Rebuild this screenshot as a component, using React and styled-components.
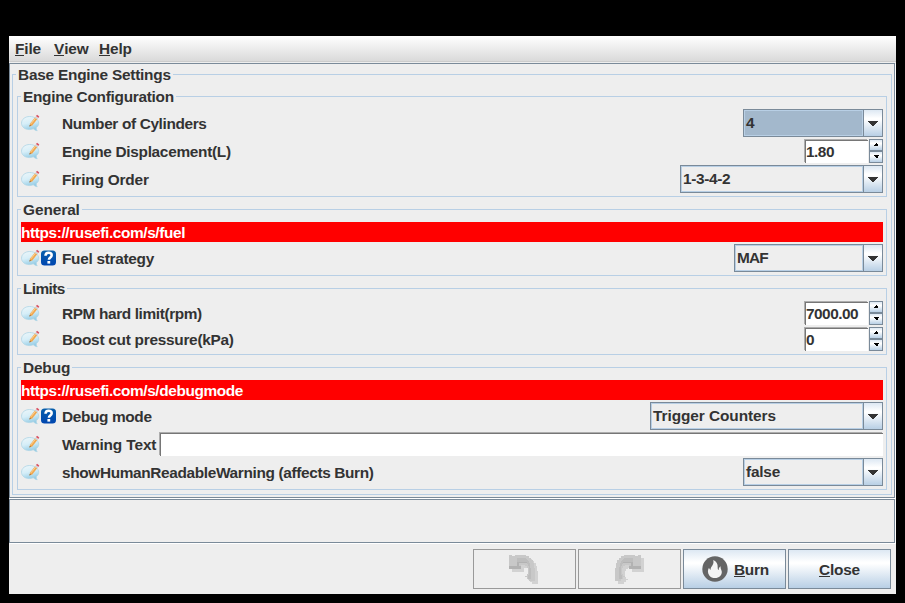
import React from "react";
import styled, { createGlobalStyle, css } from "styled-components";

const line = "#7a8a99";
const pale = "#b8cfe5";
const metal = "linear-gradient(#dde8f3 0%, #ffffff 32%, #ffffff 36%, #b8cfe5 100%)";

const GlobalStyle = createGlobalStyle`
  * { box-sizing: border-box; }
  body { margin: 0; background: #000; }
  button, input { font: inherit; color: inherit; }
`;

const Desktop = styled.div`
  height: 603px;
  padding: 36px 9px 9px;
  background: #000;
  color: #333;
  font: bold 15.4px/18px "Liberation Sans", Arial, sans-serif;
  white-space: nowrap;
`;

const Window = styled.main`
  height: 558px;
  display: flex;
  flex-direction: column;
  background: #eee;
`;

const MenuBar = styled.nav`
  height: 27px;
  display: flex;
  gap: 12px;
  padding: 4px 6px;
  background: linear-gradient(#fff, #dadada 25px, #ccc 25px, #ccc 26px, #eee 26px);
`;

const MenuItem = styled.span`
  width: ${(p) => p.$width}px;
  letter-spacing: -0.15px;
`;

const Mnemonic = styled.span`
  box-shadow: 0 -1px 0 #333 inset;
  display: inline-block;
  height: 16px;
  line-height: 18px;
`;

const ScrollPane = styled.section`
  height: ${(p) => p.$height}px;
  border: 1px solid ${line};
  margin: 0 1px 1px 0;
  padding: ${(p) => p.$pad || "0"};
  box-shadow: 1px 1px 0 #fff;
`;

const TitledPanel = styled.section`
  position: relative;
  border: 1px solid ${pale};
  display: flex;
  flex-direction: column;
  gap: ${(p) => (p.$outer ? 12 : 2)}px;
  padding: ${(p) => (p.$outer ? "21px 4px 4px" : "12px 3px 3px")};
`;

const PanelTitle = styled.h2`
  position: absolute;
  left: 3px;
  top: -9px;
  margin: 0;
  padding: 0 2px;
  background: #eee;
  font: inherit;
  letter-spacing: ${(p) => p.$track || 0}px;
`;

const LinkBar = styled.a`
  height: 20px;
  padding-top: 2px;
  background: #f00;
  color: #fff;
  letter-spacing: -0.38px;
`;

const SettingRow = styled.div`
  height: ${(p) => p.$height}px;
  display: flex;
  align-items: center;
`;

const IconSlot = styled.div`
  width: 41px;
  height: 20px;
  display: flex;
  align-items: center;
  gap: 1px;
  flex: none;
`;

const Label = styled.label`
  flex: ${(p) => (p.$fit ? "0 0 97px" : 1)};
  padding-top: 2px;
  letter-spacing: ${(p) => p.$track || 0}px;
`;

const ComboBox = styled.div`
  width: ${(p) => p.$width}px;
  height: 28px;
  display: flex;
  border: 1px solid ${line};
`;

const ComboValue = styled.div`
  flex: 1;
  border: 1px solid ${pale};
  padding: 3px 0 0 1px;
  background: ${(p) => (p.$focused ? "#a3b8cc" : "#eee")};
  letter-spacing: ${(p) => p.$track || 0}px;
`;

const ComboButton = styled.div`
  width: 19px;
  border-left: 1px solid ${line};
  background: ${metal};
  display: flex;
  justify-content: center;
  padding-top: 11px;
`;

const sunken = css`
  background: #fff;
  border: solid #767676;
  border-width: 1px 0 0 1px;
  box-shadow: -1px -1px 0 #adadad;
`;

const SpinnerBox = styled.div`
  width: 79px;
  height: 24px;
  display: flex;
`;

const SpinnerField = styled.div`
  ${sunken}
  width: 63px;
  margin: 1px 1px 0 1px;
  padding: 2px 0 0;
  letter-spacing: -0.5px;
`;

const SpinnerButtons = styled.div`
  width: 14px;
  display: grid;
  grid-template-rows: 12px 12px;
`;

const SpinnerButton = styled.div`
  border: 1px solid ${line};
  background: ${metal};
  display: grid;
  place-items: center;
`;

const TextField = styled.div`
  ${sunken}
  flex: 1;
  height: 23px;
  margin: 1px 0 0 1px;
`;

const ButtonBar = styled.footer`
  display: flex;
  justify-content: flex-end;
  gap: 2px;
  padding: 5px 5px 0 0;
`;

const ActionButton = styled.button`
  width: 103px;
  height: 40px;
  padding: 0;
  display: flex;
  align-items: center;
  justify-content: center;
  gap: 6px;
  border: 1px solid ${(p) => (p.disabled ? "#999" : line)};
  border-radius: 0;
  background: ${(p) => (p.disabled ? "#eee" : metal)};
`;

const ButtonText = styled.span`
  padding-top: 2px;
  letter-spacing: -0.2px;
`;

const BurnGlyph = styled.svg`
  display: block;
  margin: 0 0 1px 2px;
`;

const NoteIcon = () => (
  <svg width="19" height="18" viewBox="0 0 19 18">
    <defs>
      <linearGradient id="bubble" x1="0.1" y1="0" x2="0.4" y2="1">
        <stop offset="0" stopColor="#edf6f9" />
        <stop offset="0.5" stopColor="#d6eef8" />
        <stop offset="1" stopColor="#93cbe4" />
      </linearGradient>
    </defs>
    <path d="M8.700 2.500C4 2.500.5 5.400.5 9.100s3.400 6.500 7.700 6.500c1.500 0 3-.3 4.100-.8 1 1 2.200 1.600 3.900 2-.8-1-1-2.200-.8-3.300 1.500-1 2.300-2.500 2.300-4.200 0-3.700-3.900-6.800-9-6.800z" fill="url(#bubble)" stroke="#aed6e6" strokeWidth=".8" />
    <path d="m8.400 12.600.7-3 5-6.300 2.300 1.700-5.100 6.500z" fill="#f0a850" />
    <path d="m9.900 9.900 5-6.300" stroke="#ffdca2" strokeWidth=".8" />
    <path d="m8.400 12.600.4-1.700 1.200.9z" fill="#6a584a" />
    <path d="m14.100 3 2.500 2" stroke="#c8d0d6" strokeWidth="1.300" />
    <path d="m14.900 2 1.200-1.300 2.200 1.800-1 1.400z" fill="#d85565" />
  </svg>
);

const HelpIcon = () => (
  <svg width="15" height="16" viewBox="0 0 15 16">
    <defs>
      <linearGradient id="help" x1="0" y1="0" x2="0" y2="1">
        <stop offset="0" stopColor="#075fab" />
        <stop offset="1" stopColor="#0046b0" />
      </linearGradient>
    </defs>
    <rect y=".5" width="15" height="15" rx="3.500" fill="url(#help)" />
    <path d="M4.500 5.800c0-1.900 1.200-3 3.100-3s3.100 1 3.100 2.500c0 2.200-2.800 2.200-2.800 4.500" fill="none" stroke="#fff" strokeWidth="2.500" />
    <path d="M6.400 11h2.800v2.600H6.400z" fill="#fff" />
  </svg>
);

const DownArrow = () => (
  <svg width="10" height="5" viewBox="0 0 10 5" shapeRendering="crispEdges">
    <path d="M0 0h10v1H9v1H8v1H7v1H6v1H4V4H3V3H2V2H1V1H0z" fill="#333" />
  </svg>
);

const SpinArrow = ({ down }) => (
  <svg width="5" height="4" viewBox="0 0 5 4" shapeRendering="crispEdges">
    <path d={down ? "M0 0h5v1H4v2H2V2H1V1H0z" : "M2 0h1v1h1v2H0V2h1V1h1z"} fill="#000" />
  </svg>
);

const arrowShape =
  "M0 1H3V2H6V1H17V2H20V4H22V6H24V9H25V14H26V27H20V25H18V23H16V22H18V20H19V14H18V12H16V11H12V15H0z";

const ArrowIcon = ({ redo }) => {
  const mirror = redo ? "matrix(-1 0 0 1 27 0)" : undefined;
  return (
    <svg width="31" height="30" viewBox="0 0 31 30" shapeRendering="crispEdges">
      <g transform="translate(3 3)">
        <path d={arrowShape} transform={mirror} fill="#d2d2d2" />
      </g>
      <g transform={mirror}>
        <path d={arrowShape} fill="#c8c8c8" />
        <path d="M8 4h8l3 2 2 4 1 7v8h-3v-4h1v-8l-2-4H8z" fill="#bdbdbd" />
        <path d="M0 12h12v3H0zM8 8h10v1H10v3H8z" fill="#b2b2b2" />
      </g>
    </svg>
  );
};

const BurnIcon = () => (
  <BurnGlyph width="26" height="26" viewBox="0 0 26 26">
    <circle cx="13" cy="13" r="12.700" fill="#656565" />
    <path d="M11.300 4c.7 3.200-.5 4.800-1.600 6.600-.8 1.200-1.200 2.200-1.100 3.300-.9-.5-1.400-1.200-1.600-2.100C5.600 14 5.500 17 7.300 19.400c1.400 1.800 3.400 2.700 5.800 2.700 4 0 6.900-2.800 6.700-6.300-.1-2-1.500-3-1.200-5.600-1.300.8-1.900 2-1.900 3.900-.9-.5-1.100-1.500-1-2.700.2-3.200-1.200-5.900-4.400-7.400z" fill="#f5f5f5" />
  </BurnGlyph>
);

const Combo = ({ width, value, focused, track }) => (
  <ComboBox $width={width}>
    <ComboValue $focused={focused} $track={track}>{value}</ComboValue>
    <ComboButton><DownArrow /></ComboButton>
  </ComboBox>
);

const Spinner = ({ value }) => (
  <SpinnerBox>
    <SpinnerField>{value}</SpinnerField>
    <SpinnerButtons>
      <SpinnerButton><SpinArrow /></SpinnerButton>
      <SpinnerButton><SpinArrow down /></SpinnerButton>
    </SpinnerButtons>
  </SpinnerBox>
);

const Setting = ({ label, help, height = 28, fit, track, children }) => (
  <SettingRow $height={height}>
    <IconSlot>
      <NoteIcon />
      {help && <HelpIcon />}
    </IconSlot>
    <Label $fit={fit} $track={track}>{label}</Label>
    {children}
  </SettingRow>
);

export default function App() {
  return (
    <Desktop>
      <GlobalStyle />
      <Window>
        <MenuBar>
          <MenuItem $width={27}><Mnemonic>F</Mnemonic>ile</MenuItem>
          <MenuItem $width={33}><Mnemonic>V</Mnemonic>iew</MenuItem>
          <MenuItem $width={34}><Mnemonic>H</Mnemonic>elp</MenuItem>
        </MenuBar>
        <ScrollPane $height={435} $pad="10px 2px 2px">
          <TitledPanel $outer>
            <PanelTitle $track={-0.23}>Base Engine Settings</PanelTitle>
            <TitledPanel>
              <PanelTitle $track={-0.28}>Engine Configuration</PanelTitle>
              <Setting label="Number of Cylinders" track={-0.36}><Combo width={140} value="4" focused /></Setting>
              <Setting label="Engine Displacement(L)" track={-0.3} height={24}><Spinner value="1.80" /></Setting>
              <Setting label="Firing Order" track={-0.18}><Combo width={203} value="1-3-4-2" track={-0.33} /></Setting>
            </TitledPanel>
            <TitledPanel>
              <PanelTitle $track={-0.07}>General</PanelTitle>
              <LinkBar>https://rusefi.com/s/fuel</LinkBar>
              <Setting label="Fuel strategy" track={-0.3} help><Combo width={149} value="MAF" track={-0.8} /></Setting>
            </TitledPanel>
            <TitledPanel>
              <PanelTitle $track={-0.6}>Limits</PanelTitle>
              <Setting label="RPM hard limit(rpm)" track={-0.38} height={24}><Spinner value="7000.00" /></Setting>
              <Setting label="Boost cut pressure(kPa)" track={-0.27} height={24}><Spinner value="0" /></Setting>
            </TitledPanel>
            <TitledPanel>
              <PanelTitle $track={-0.15}>Debug</PanelTitle>
              <LinkBar>https://rusefi.com/s/debugmode</LinkBar>
              <Setting label="Debug mode" track={-0.36} help><Combo width={233} value="Trigger Counters" track={-0.06} /></Setting>
              <Setting label="Warning Text" track={-0.12} height={24} fit><TextField /></Setting>
              <Setting label="showHumanReadableWarning (affects Burn)" track={-0.35}><Combo width={140} value="false" track={-0.2} /></Setting>
            </TitledPanel>
          </TitledPanel>
        </ScrollPane>
        <ScrollPane $height={44} />
        <ButtonBar>
          <ActionButton disabled aria-label="Undo"><ArrowIcon /></ActionButton>
          <ActionButton disabled aria-label="Redo"><ArrowIcon redo /></ActionButton>
          <ActionButton><BurnIcon /><ButtonText><Mnemonic>B</Mnemonic>urn</ButtonText></ActionButton>
          <ActionButton><ButtonText><Mnemonic>C</Mnemonic>lose</ButtonText></ActionButton>
        </ButtonBar>
      </Window>
    </Desktop>
  );
}
